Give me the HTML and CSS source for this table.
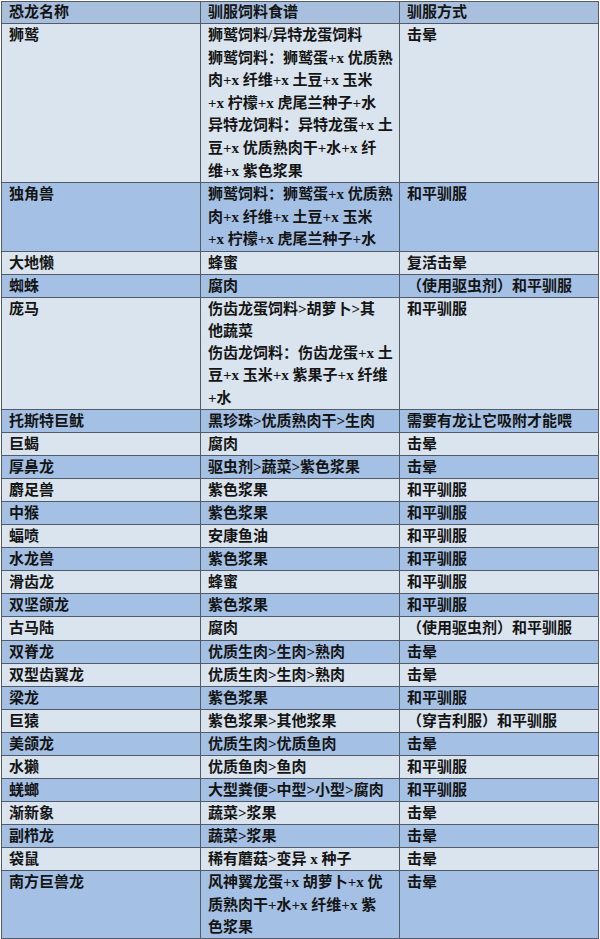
FILE: index.html
```html
<!DOCTYPE html>
<html lang="zh">
<head>
<meta charset="utf-8">
<title>驯服表</title>
<link rel="stylesheet" href="styles.css">
</head>
<body>
<table class="tame">
  <colgroup><col class="c1"><col class="c2"><col class="c3"></colgroup>
  <thead>
    <tr class="head"><th>恐龙名称</th><th>驯服饲料食谱</th><th>驯服方式</th></tr>
  </thead>
  <tbody>
    <tr class="lt multi"><td>狮鹫</td><td>狮鹫饲料/异特龙蛋饲料<br>狮鹫饲料：狮鹫蛋+x 优质熟<br>肉+x 纤维+x 土豆+x 玉米<br>+x 柠檬+x 虎尾兰种子+水<br>异特龙饲料：异特龙蛋+x 土<br>豆+x 优质熟肉干+水+x 纤<br>维+x 紫色浆果</td><td>击晕</td></tr>
    <tr class="dk multi"><td>独角兽</td><td>狮鹫饲料：狮鹫蛋+x 优质熟<br>肉+x 纤维+x 土豆+x 玉米<br>+x 柠檬+x 虎尾兰种子+水</td><td>和平驯服</td></tr>
    <tr class="lt"><td>大地懒</td><td>蜂蜜</td><td>复活击晕</td></tr>
    <tr class="dk"><td>蜘蛛</td><td>腐肉</td><td>（使用驱虫剂）和平驯服</td></tr>
    <tr class="lt"><td>庞马</td><td>伤齿龙蛋饲料&gt;胡萝卜&gt;其<br>他蔬菜<br>伤齿龙饲料：伤齿龙蛋+x 土<br>豆+x 玉米+x 紫果子+x 纤维<br>+水</td><td>和平驯服</td></tr>
    <tr class="dk"><td>托斯特巨鱿</td><td>黑珍珠&gt;优质熟肉干&gt;生肉</td><td>需要有龙让它吸附才能喂</td></tr>
    <tr class="lt"><td>巨蝎</td><td>腐肉</td><td>击晕</td></tr>
    <tr class="dk"><td>厚鼻龙</td><td>驱虫剂&gt;蔬菜&gt;紫色浆果</td><td>击晕</td></tr>
    <tr class="lt"><td>麝足兽</td><td>紫色浆果</td><td>和平驯服</td></tr>
    <tr class="dk"><td>中猴</td><td>紫色浆果</td><td>和平驯服</td></tr>
    <tr class="lt"><td>蝠喷</td><td>安康鱼油</td><td>和平驯服</td></tr>
    <tr class="dk"><td>水龙兽</td><td>紫色浆果</td><td>和平驯服</td></tr>
    <tr class="lt"><td>滑齿龙</td><td>蜂蜜</td><td>和平驯服</td></tr>
    <tr class="dk"><td>双坚颌龙</td><td>紫色浆果</td><td>和平驯服</td></tr>
    <tr class="lt"><td>古马陆</td><td>腐肉</td><td>（使用驱虫剂）和平驯服</td></tr>
    <tr class="dk"><td>双脊龙</td><td>优质生肉&gt;生肉&gt;熟肉</td><td>击晕</td></tr>
    <tr class="lt"><td>双型齿翼龙</td><td>优质生肉&gt;生肉&gt;熟肉</td><td>击晕</td></tr>
    <tr class="dk"><td>梁龙</td><td>紫色浆果</td><td>和平驯服</td></tr>
    <tr class="lt"><td>巨猿</td><td>紫色浆果&gt;其他浆果</td><td>（穿吉利服）和平驯服</td></tr>
    <tr class="dk"><td>美颌龙</td><td>优质生肉&gt;优质鱼肉</td><td>击晕</td></tr>
    <tr class="lt"><td>水獭</td><td>优质鱼肉&gt;鱼肉</td><td>和平驯服</td></tr>
    <tr class="dk"><td>蜣螂</td><td>大型粪便&gt;中型&gt;小型&gt;腐肉</td><td>和平驯服</td></tr>
    <tr class="lt"><td>渐新象</td><td>蔬菜&gt;浆果</td><td>击晕</td></tr>
    <tr class="dk"><td>副栉龙</td><td>蔬菜&gt;浆果</td><td>击晕</td></tr>
    <tr class="lt"><td>袋鼠</td><td>稀有蘑菇&gt;变异 x 种子</td><td>击晕</td></tr>
    <tr class="dk"><td>南方巨兽龙</td><td>风神翼龙蛋+x 胡萝卜+x 优<br>质熟肉干+水+x 纤维+x 紫<br>色浆果</td><td>击晕</td></tr>
  </tbody>
</table>
</body>
</html>
```
FILE: styles.css
```css
html, body {
  margin: 0;
  padding: 0;
  background: #ffffff;
}
body {
  padding: 1px 0 0 1px;
  overflow: hidden;
  height: 939px;
  box-sizing: border-box;
}
.tame {
  border-collapse: collapse;
  table-layout: fixed;
  width: 597px;
  font-family: "Liberation Serif", "Noto Sans CJK SC", serif;
  font-size: 15px;
  font-weight: 700;
  color: #141414;
}
.c1 { width: 199px; }
.c2 { width: 199px; }
.c3 { width: 199px; }
.tame th,
.tame td {
  border: 1px solid #525b66;
  padding: 0 0 0 7px;
  line-height: 22.1px;
  text-align: left;
  vertical-align: top;
  white-space: nowrap;
  overflow: hidden;
}
.tame th {
  line-height: 21px;
}
.multi td {
  line-height: 22.6px;
}
.head { background: #a8c0de; }
.lt { background: #dae4ee; }
.dk { background: #a4c1e5; }
```
